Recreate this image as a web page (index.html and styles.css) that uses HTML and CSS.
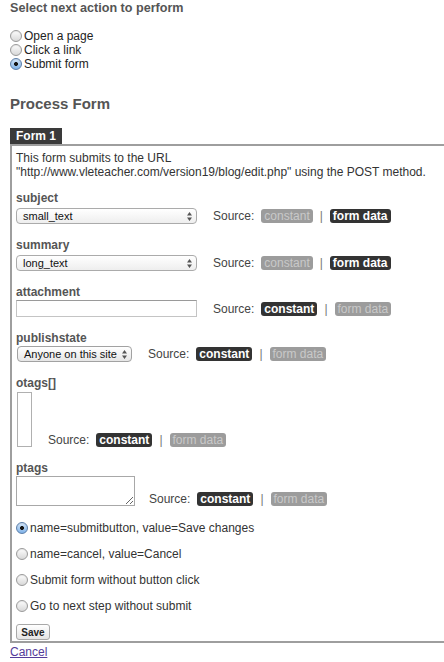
FILE: index.html
```html
<!DOCTYPE html>
<html>
<head>
<meta charset="utf-8">
<title>Process Form</title>
<link rel="stylesheet" href="styles.css">
</head>
<body>
<h1 class="title">Select next action to perform</h1>
<div class="actions">
  <div class="action"><span class="radio"></span>Open a page</div>
  <div class="action"><span class="radio"></span>Click a link</div>
  <div class="action"><span class="radio checked"></span>Submit form</div>
</div>

<h2 class="section">Process Form</h2>
<div class="tab">Form 1</div>
<div class="box">
  <p class="intro">This form submits to the URL<br>"http://www.vleteacher.com/version19/blog/edit.php" using the POST method.</p>

  <div class="field first">
    <div class="label">subject</div>
    <div class="row">
      <div class="select wide"><span>small_text</span><svg class="arrows" width="5" height="9" viewBox="0 0 5 9"><path d="M0 3.5 L2.5 0 L5 3.5Z M0 5.5 L5 5.5 L2.5 9Z"/></svg></div>
      <div class="source"><span class="source-label">Source:</span><span class="badge off">constant</span><span class="sep">|</span><span class="badge on">form data</span></div>
    </div>
  </div>

  <div class="field">
    <div class="label">summary</div>
    <div class="row">
      <div class="select wide"><span>long_text</span><svg class="arrows" width="5" height="9" viewBox="0 0 5 9"><path d="M0 3.5 L2.5 0 L5 3.5Z M0 5.5 L5 5.5 L2.5 9Z"/></svg></div>
      <div class="source"><span class="source-label">Source:</span><span class="badge off">constant</span><span class="sep">|</span><span class="badge on">form data</span></div>
    </div>
  </div>

  <div class="field">
    <div class="label">attachment</div>
    <div class="row tight">
      <input class="text-input" type="text">
      <div class="source"><span class="source-label">Source:</span><span class="badge on">constant</span><span class="sep">|</span><span class="badge off">form data</span></div>
    </div>
  </div>

  <div class="field">
    <div class="label">publishstate</div>
    <div class="row tight">
      <div class="select button"><span>Anyone on this site</span><svg class="arrows" width="5" height="9" viewBox="0 0 5 9"><path d="M0 3.5 L2.5 0 L5 3.5Z M0 5.5 L5 5.5 L2.5 9Z"/></svg></div>
      <div class="source"><span class="source-label">Source:</span><span class="badge on">constant</span><span class="sep">|</span><span class="badge off">form data</span></div>
    </div>
  </div>

  <div class="field">
    <div class="label">otags[]</div>
    <div class="row list bottom">
      <div class="listbox"></div>
      <div class="source"><span class="source-label">Source:</span><span class="badge on">constant</span><span class="sep">|</span><span class="badge off">form data</span></div>
    </div>
  </div>

  <div class="field">
    <div class="label">ptags</div>
    <div class="row tight bottom">
      <textarea class="textarea"></textarea>
      <div class="source near"><span class="source-label">Source:</span><span class="badge on">constant</span><span class="sep">|</span><span class="badge off">form data</span></div>
    </div>
  </div>

  <div class="choices">
    <div class="choice"><span class="radio checked"></span>name=submitbutton, value=Save changes</div>
    <div class="choice"><span class="radio"></span>name=cancel, value=Cancel</div>
    <div class="choice"><span class="radio"></span>Submit form without button click</div>
    <div class="choice"><span class="radio"></span>Go to next step without submit</div>
  </div>

  <button class="save" type="button">Save</button>
</div>
<a class="cancel" href="#">Cancel</a>
</body>
</html>
```

FILE: styles.css
```css
body {
  margin: 0;
  padding: 0 0 0 10px;
  font-family: "Liberation Sans", Arial, sans-serif;
  font-size: 12px;
  color: #333;
  background: #fff;
}

.title {
  margin: 0;
  font-size: 12.6px;
  line-height: 16px;
  font-weight: bold;
  color: #555;
}

.actions {
  margin-top: 13px;
}

.action {
  display: flex;
  align-items: center;
  gap: 2px;
  height: 14px;
  line-height: 14px;
  color: #222;
}

.radio {
  flex: none;
  box-sizing: border-box;
  width: 12px;
  height: 12px;
  border-radius: 50%;
  border: 1px solid #9a9a9a;
  background: linear-gradient(#fdfdfd, #d8d8d8);
  box-shadow: inset 0 1px 1px rgba(0, 0, 0, 0.08);
}

.radio.checked {
  border-color: #5b7ea9;
  background:
    radial-gradient(circle, #151515 0 1.6px, transparent 2.3px),
    linear-gradient(#d6e8fb, #7fb2e8);
}

.section {
  margin: 24px 0 0;
  font-size: 15px;
  line-height: 18px;
  font-weight: bold;
  color: #555;
}

.tab {
  width: max-content;
  margin-top: 15px;
  padding: 0 6px;
  background: #3a3a3a;
  color: #fff;
  font-weight: bold;
  line-height: 16px;
}

.box {
  border: 2px solid #9e9e9e;
  border-right: 0;
  padding: 5px 6px 1px 4px;
}

.intro {
  margin: 0;
  line-height: 14px;
}

.field {
  margin-top: 14px;
}

.field.first {
  margin-top: 12px;
}

.label {
  font-weight: bold;
  color: #555;
  line-height: 15px;
}

.row {
  display: flex;
  align-items: center;
  margin-top: 2px;
}

.row.tight {
  margin-top: 0;
}

.row.list {
  margin-top: 1px;
}

.row.bottom {
  align-items: flex-end;
}

.select {
  display: flex;
  align-items: center;
  justify-content: space-between;
  box-sizing: border-box;
  height: 16px;
  padding: 0 4px 0 6px;
  border: 1px solid #ababab;
  border-radius: 4px;
  background: linear-gradient(#ffffff, #eeeeee);
  font-size: 11px;
  color: #111;
}

.select.wide {
  width: 181px;
}

.select.button {
  width: 115px;
  margin-left: 1px;
  border-color: #a2a2a2;
  background: linear-gradient(#ffffff, #e6e6e6);
}

.arrows {
  fill: #555;
}

.text-input {
  box-sizing: border-box;
  width: 181px;
  height: 17px;
  margin: 0;
  padding: 0;
  border: 1px solid #c4c4c4;
  border-top-color: #9a9a9a;
  background: #fff;
}

.listbox {
  box-sizing: border-box;
  width: 15px;
  height: 55px;
  margin-left: 1px;
  border: 1px solid #b0b0b0;
  background: #fff;
}

.textarea {
  box-sizing: border-box;
  width: 119px;
  height: 30px;
  margin: 0;
  padding: 0;
  border: 1px solid #a8a8a8;
  resize: both;
  font: inherit;
}

.source {
  display: flex;
  align-items: center;
  margin-left: 16px;
  line-height: 14px;
  color: #444;
}

.source.near {
  margin-left: 14px;
}

.source-label {
  margin-right: 7px;
}

.badge {
  padding: 0 3px;
  border-radius: 3px;
  line-height: 14px;
}

.badge.on {
  background: #333;
  color: #fff;
  font-weight: bold;
}

.badge.off {
  background: #9c9c9c;
  color: #c9c9c9;
}

.sep {
  margin: 0 7px;
  color: #777;
}

.choices {
  padding-top: 3px;
}

.choice {
  display: flex;
  align-items: center;
  gap: 2px;
  margin-top: 12px;
  line-height: 14px;
  color: #333;
}

.save {
  display: block;
  box-sizing: border-box;
  width: 34px;
  height: 16px;
  margin-top: 11px;
  padding: 0;
  border: 1px solid #a8a8a8;
  border-radius: 3px;
  background: linear-gradient(#ffffff, #e4e4e4);
  font-family: "Liberation Sans", Arial, sans-serif;
  font-size: 10px;
  font-weight: bold;
  color: #222;
}

.cancel {
  display: block;
  width: max-content;
  margin-top: 2px;
  line-height: 14px;
  color: #553c9a;
}
```
